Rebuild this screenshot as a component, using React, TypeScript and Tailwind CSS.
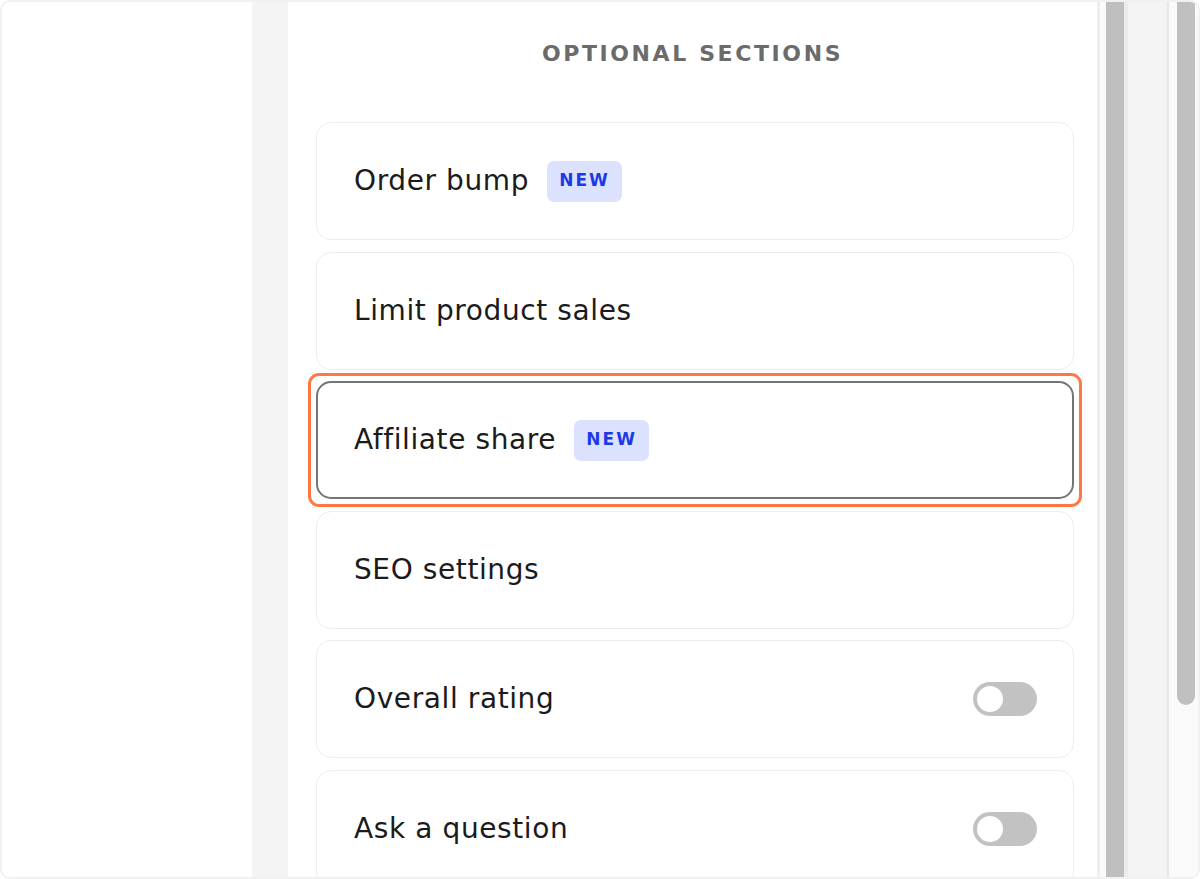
import React from 'react'

type Row = { label: string; badge?: boolean; toggle?: boolean; active?: boolean }

const rows: Row[] = [
  { label: 'Order bump', badge: true },
  { label: 'Limit product sales' },
  { label: 'Affiliate share', badge: true, active: true },
  { label: 'SEO settings' },
  { label: 'Overall rating', toggle: true },
  { label: 'Ask a question', toggle: true },
]

function Badge() {
  return (
    <span className="ml-[18px] inline-flex h-[41px] w-[75px] items-center justify-center rounded-[7px] bg-[#dce2fd] text-[17px] font-bold tracking-[2px] text-[#1c3ae6]">
      NEW
    </span>
  )
}

function Toggle() {
  return (
    <span className="flex h-[34px] w-[64px] items-center rounded-full bg-[#c2c2c2] px-[4px]">
      <span className="h-[26px] w-[26px] rounded-full bg-white" />
    </span>
  )
}

function SectionCard({ row }: { row: Row }) {
  return (
    <div
      className={`relative flex h-[118px] shrink-0 items-center justify-between rounded-[15px] bg-white pr-[36px] ${
        row.active ? 'border-2 border-[#757575] pl-[36px]' : 'border-[1.5px] border-[#ededed] pl-[37px]'
      }`}
    >
      {row.active && (
        <span className="pointer-events-none absolute -inset-[10px] rounded-[11px] border-[3px] border-[#ff7743]" />
      )}
      <div className="flex items-center">
        <span className="text-[28px] tracking-[0.6px] text-[#1b1b1b]">{row.label}</span>
        {row.badge && <Badge />}
      </div>
      {row.toggle && <Toggle />}
    </div>
  )
}

export default function App() {
  return (
    <div
      className="flex h-[879px] w-[1200px] overflow-hidden rounded-[10px] border-2 border-[#f0f0f5] bg-white"
      style={{ fontFamily: '"DejaVu Sans", "Noto Sans", sans-serif' }}
    >
      <div className="w-[250px] shrink-0 bg-white" />
      <div className="w-[36px] shrink-0 bg-[#f4f4f4]" />

      {/* main panel */}
      <div className="flex w-[809px] shrink-0 flex-col">
        <h2 className="mt-[38px] text-center text-[22px] font-bold leading-[28px] tracking-[2.6px] text-[#6b6b6b]">
          OPTIONAL SECTIONS
        </h2>
        <div className="mt-[54px] flex flex-col gap-[11.5px] pl-[28px] pr-[23px]">
          {rows.map((r) => (
            <SectionCard key={r.label} row={r} />
          ))}
        </div>
      </div>

      {/* scroll gutters */}
      <div className="w-[3px] shrink-0 bg-[#eeeeee]" />
      <div className="w-[6px] shrink-0 bg-[#fbfbfb]" />
      <div className="w-[18px] shrink-0 bg-[#bfbfbf]" />
      <div className="w-[4px] shrink-0 bg-[#ececec]" />
      <div className="w-[39px] shrink-0 bg-[#f4f4f4]" />
      <div className="w-[2px] shrink-0 bg-[#e6e6e6]" />
      <div className="w-[29px] shrink-0 bg-[#fafafb] pl-[8px]">
        <div className="h-[703px] w-[18px] rounded-b-full bg-[#c0c0c0]" />
      </div>
    </div>
  )
}
